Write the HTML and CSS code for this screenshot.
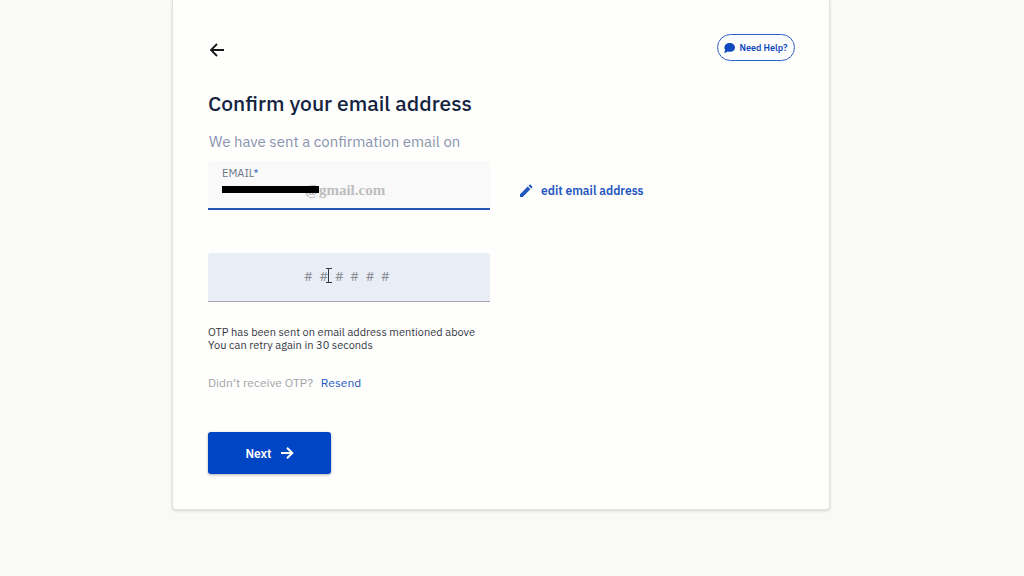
FILE: index.html
```html
<!DOCTYPE html>
<html lang="en">
<head>
<meta charset="utf-8">
<meta name="viewport" content="width=device-width, initial-scale=1">
<title>Confirm your email address</title>
<link rel="stylesheet" href="styles.css">
</head>
<body>
<main class="card">
  <header class="topbar">
    <button class="back" type="button" aria-label="Back">
      <svg width="16" height="16" viewBox="0 0 16 16" fill="none" stroke="currentColor" stroke-width="1.800"><path d="M15 8H2M8 2 2 8 8 14"/></svg>
    </button>
    <button class="help" type="button">
      <svg width="11" height="10" viewBox="0 0 11 10" fill="currentColor"><path d="M5.7 0C8.700 0 11 1.900 11 4.400S8.700 8.800 5.700 8.800c-.8 0-1.500-.1-2.200-.4C2.600 9.200 1.400 9.700 0 9.700.7 8.900 1.100 8 1.200 7.100.7 6.300.4 5.400.4 4.400.4 1.900 2.700 0 5.700 0Z"/></svg>
      Need Help?
    </button>
  </header>
  <h1 class="title">Confirm your email address</h1>
  <p class="subtitle">We have sent a confirmation email on</p>
  <form class="form">
    <div class="email-row">
      <div class="field">
        <label class="label" for="email">EMAIL<span class="required">*</span></label>
        <input class="email" id="email" type="text" value="@gmail.com" readonly>
        <span class="redaction"></span>
      </div>
      <a class="edit" href="#email">
        <svg width="14" height="14" viewBox="0 0 14 14" fill="currentColor"><path d="M1 10.300 8.700 2.600l2.700 2.700L3.700 13H1ZM9.500 1.800l1-1c.3-.3.8-.3 1.100 0l1.600 1.600c.3.300.3.800 0 1.100l-1 1Z"/></svg>
        edit email address
      </a>
    </div>
    <div class="otp-field">
      <input class="otp" type="text" aria-label="OTP" placeholder="#&nbsp;&nbsp;#&nbsp;&nbsp;#&nbsp;&nbsp;#&nbsp;&nbsp;#&nbsp;&nbsp;#">
      <svg class="cursor" width="8" height="15" viewBox="0 0 8 15" fill="none" stroke="currentColor"><path d="M1 .5h2.500v14M7 .5H3.500M1 14.500h6"/></svg>
    </div>
    <p class="note">OTP has been sent on email address mentioned above<br>You can retry again in 30 seconds</p>
    <p class="retry">Didn’t receive OTP? <a class="resend" href="#">Resend</a></p>
    <button class="next" type="button">
      Next
      <svg width="13" height="12" viewBox="0 0 13 12" fill="none" stroke="currentColor" stroke-width="2"><path d="M0 6h11M6 .8 11.300 6 6 11.200"/></svg>
    </button>
  </form>
</main>
</body>
</html>
```
FILE: styles.css
```css
* { box-sizing: border-box; }
body {
  margin: 0;
  padding: 0 22px 66px 0;
  background: #f9f9f8;
  font-family: "IBM Plex Sans", Roboto, "Noto Sans", sans-serif;
  color: #14243f;
}
button { font: inherit; cursor: pointer; }
a { text-decoration: none; color: #2457bd; }
svg { flex: none; }
.card {
  max-width: 658px;
  margin: 0 auto;
  padding: 34px 34px 35px 35px;
  background: #fefefd;
  border: solid #e2e2e1;
  border-width: 0 1px 1px;
  border-radius: 0 0 4px 4px;
  box-shadow: 0 1px 3px #00000026;
}
.topbar { display: flex; justify-content: space-between; align-items: center; }
.back {
  display: flex;
  padding: 5px 0 0 1px;
  border: 0;
  background: none;
  color: #15181c;
}
.help {
  display: flex;
  align-items: center;
  justify-content: center;
  gap: 4px;
  width: 78px;
  height: 27px;
  padding: 0;
  border: 1px solid #2b60c7;
  border-radius: 14px;
  background: none;
  color: #1049bd;
  font-size: 9px;
  font-weight: 600;
  white-space: nowrap;
}
.title { margin: 28px 0 0; font-size: 21px; line-height: 28px; font-weight: 500; }
.subtitle { margin: 15px 0 0 1px; font-size: 15px; line-height: 20px; color: #8a94ac; }
.email-row { display: flex; align-items: center; gap: 29px; margin-top: 9px; }
.field {
  position: relative;
  width: 282px;
  padding: 4px 14px 9px;
  background: #f9f9f9;
  border-bottom: 2px solid #2455b5;
  border-radius: 3px 3px 0 0;
}
.label { display: block; font-size: 11px; line-height: 16px; color: #6c7586; }
.required { color: #2f62c4; }
.email {
  display: block;
  width: 100%;
  height: 18px;
  padding: 0 0 0 83px;
  border: 0;
  outline: 0;
  background: none;
  color: #bdbdbd;
  font: bold 15px "Liberation Serif", serif;
}
.redaction { position: absolute; left: 14px; top: 25px; width: 97px; height: 7px; background: #000; }
.edit { display: flex; align-items: center; gap: 8px; padding-top: 10px; font-size: 12px; line-height: 20px; font-weight: 600; }
.otp-field { position: relative; width: 282px; margin-top: 43px; }
.otp {
  display: block;
  width: 100%;
  height: 49px;
  padding: 0 4px 2px 0;
  border: 0;
  border-bottom: 1px solid #a5a8b2;
  border-radius: 3px 3px 0 0;
  background: #e9edf5;
  text-align: center;
  font-family: inherit;
  font-size: 13px;
}
.otp::placeholder { color: #858891; opacity: 1; }
.cursor { position: absolute; left: 117px; top: 15px; color: #33363b; }
.note { margin: 24px 0 0; font-size: 11px; line-height: 13px; color: #34373d; }
.retry { display: flex; gap: 8px; margin: 22px 0 0; font-size: 12px; line-height: 18px; color: #a3a3a5; }
.next {
  display: flex;
  align-items: center;
  justify-content: center;
  gap: 9px;
  width: 123px;
  height: 42px;
  margin-top: 40px;
  border: 0;
  border-radius: 3px;
  background: #0045c4;
  box-shadow: 0 1px 3px #0000004d;
  color: #fff;
  font-size: 12px;
  font-weight: 600;
}
```
